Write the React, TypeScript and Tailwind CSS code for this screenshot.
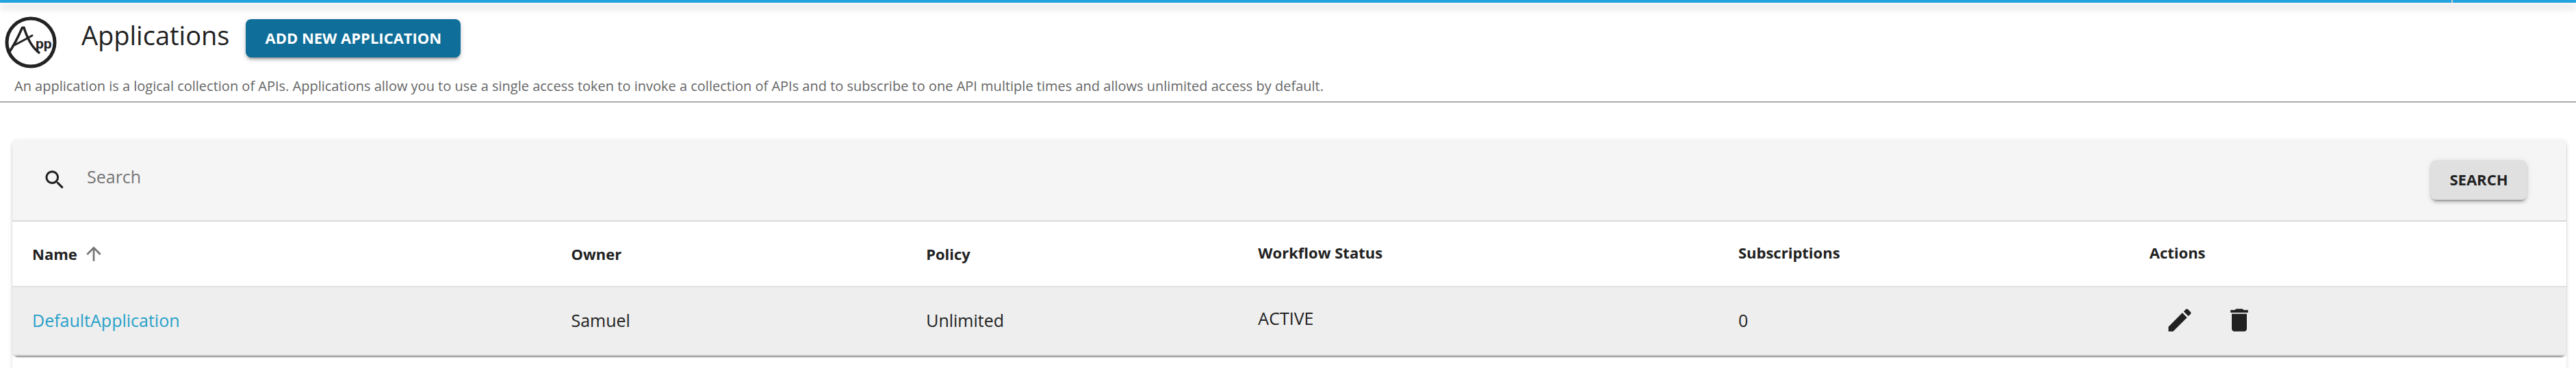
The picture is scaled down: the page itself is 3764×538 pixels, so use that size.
import React from "react";

const columns = [
  { label: "Name", width: "w-[21.1%]", sortable: true, sorted: true },
  { label: "Owner", width: "w-[13.9%]", sortable: true },
  { label: "Policy", width: "w-[13%]", sortable: true },
  { label: "Workflow Status", width: "w-[18.8%]" },
  { label: "Subscriptions", width: "w-[16.1%]" },
  { label: "Actions", width: "w-[17.1%]" },
];

const applications = [
  {
    name: "DefaultApplication",
    owner: "Samuel",
    policy: "Unlimited",
    status: "ACTIVE",
    subscriptions: 0,
  },
];

function Icon({ d, className }: { d: string; className: string }) {
  return (
    <svg viewBox="0 0 24 24" fill="currentColor" aria-hidden="true" className={className}>
      <path d={d} />
    </svg>
  );
}

const icons = {
  search:
    "M15.5 14h-.79l-.28-.27C15.41 12.59 16 11.11 16 9.5 16 5.91 13.09 3 9.5 3S3 5.91 3 9.5 5.91 16 9.5 16c1.61 0 3.09-.59 4.23-1.57l.27.28v.79l5 4.99L20.49 19l-4.99-5zm-6 0C7.01 14 5 11.99 5 9.5S7.01 5 9.5 5 14 7.01 14 9.5 11.99 14 9.5 14z",
  up: "M4 12l1.41 1.41L11 7.83V20h2V7.83l5.58 5.59L20 12l-8-8-8 8z",
  edit: "M3 17.25V21h3.75L17.81 9.94l-3.75-3.75L3 17.25zM20.71 7.04c.39-.39.39-1.02 0-1.41l-2.34-2.34c-.39-.39-1.02-.39-1.41 0l-1.83 1.83 3.75 3.75 1.83-1.83z",
  trash: "M6 19c0 1.1.9 2 2 2h8c1.1 0 2-.9 2-2V7H6v12zM19 4h-3.5l-1-1h-5l-1 1H5v2h14V4z",
};

function AppLogo() {
  return (
    <svg viewBox="0 0 76 78" className="h-[78px] w-[76px] shrink-0" role="img" aria-label="App">
      <circle cx="38" cy="40" r="35" fill="none" stroke="#222" strokeWidth="5" />
      <g fill="none" stroke="#222" strokeLinecap="round" strokeLinejoin="round">
        <path d="M6 55C13 45 20 31 25.500 18.500H28" strokeWidth="3.500" />
        <path d="M28 18.500C31 28 38 46 50 55" strokeWidth="3.500" />
        <path d="M12 45C20 41 31 35 40 30" strokeWidth="3" />
      </g>
      <text x="45" y="49" fontFamily="Roboto, sans-serif" fontSize="21" fontWeight="700" fill="#222">
        pp
      </text>
    </svg>
  );
}

export default function App() {
  return (
    <div className="flex min-h-screen flex-col bg-white font-['Open_Sans',sans-serif] text-[#212121]">
      <header className="relative flex h-1 justify-end bg-[#22a2de] pr-[180px] shadow-[0_4px_8px_-2px_rgba(0,0,0,0.2),0_8px_10px_0_rgba(0,0,0,0.14),0_2px_20px_0_rgba(0,0,0,0.12)]">
        <span className="w-0.5 bg-[#ccc]" />
      </header>

      <section className="border-b-2 border-[#aaa] pt-[18px] pb-1.5">
        <div className="flex items-center pl-[7px]">
          <AppLogo />
          <h1 className="ml-9 pb-5 text-[38px] leading-[48px]">Applications</h1>
          <button
            type="button"
            className="mb-2.5 ml-6 h-14 rounded-lg bg-[#0f6f9a] px-7 pb-0.5 text-[22px] leading-[54px] font-bold text-white shadow-[0_6px_2px_-4px_rgba(0,0,0,0.2),0_4px_4px_0_rgba(0,0,0,0.14),0_2px_10px_0_rgba(0,0,0,0.12)]"
          >
            ADD NEW APPLICATION
          </button>
        </div>
        <p className="mt-2.5 pl-[21px] text-xl leading-8 text-[#666]">
          An application is a logical collection of APIs. Applications allow you to use a single
          access token to invoke a collection of APIs and to subscribe to one API multiple times and
          allows unlimited access by default.
        </p>
      </section>

      <main className="mx-[18px] mr-3.5 mt-[54px] flex-1 rounded-t-lg bg-white shadow-[0_4px_2px_-2px_rgba(0,0,0,0.12),0_2px_2px_0_rgba(0,0,0,0.08),0_2px_6px_0_rgba(0,0,0,0.12)]">
        <div className="rounded-lg shadow-[0_4px_2px_-2px_rgba(0,0,0,0.3),0_2px_2px_0_rgba(0,0,0,0.2)]">
          <form
            onSubmit={(e) => e.preventDefault()}
            className="flex h-[120px] items-center rounded-t border-b-2 border-[#d9d9d9] bg-[#f5f5f5] pr-[58px] pl-11"
          >
            <Icon d={icons.search} className="size-9" />
            <input
              type="text"
              aria-label="Search applications"
              placeholder="Search"
              className="mx-[29px] mb-2.5 min-w-0 flex-1 bg-transparent text-[25px] leading-9 outline-none placeholder:text-[#757575]"
            />
            <button
              type="submit"
              className="h-[58px] w-[140px] rounded-lg bg-[#e0e0e0] pb-0.5 text-[22px] leading-[56px] font-bold shadow-[0_6px_2px_-4px_rgba(0,0,0,0.2),0_4px_4px_0_rgba(0,0,0,0.14),0_2px_10px_0_rgba(0,0,0,0.12)]"
            >
              SEARCH
            </button>
          </form>

          <table className="w-full table-fixed border-separate border-spacing-0 text-left">
            <thead>
              <tr className="text-[22px] leading-8">
                {columns.map((c) => (
                  <th
                    key={c.label}
                    scope="col"
                    className={`${c.width} h-24 border-b-2 border-[#e0e0e0] pb-1 pl-[29px] font-bold`}
                  >
                    {c.sortable ? (
                      <button type="button" className="flex items-center gap-2 pt-1">
                        {c.label}
                        {c.sorted && <Icon d={icons.up} className="size-8 text-[#757575]" />}
                      </button>
                    ) : (
                      c.label
                    )}
                  </th>
                ))}
              </tr>
            </thead>
            <tbody>
              {applications.map((a) => (
                <tr
                  key={a.name}
                  className="bg-[#eee] text-[25px] leading-9 [&>td]:h-[100px] [&>td]:border-b-2 [&>td]:border-[#e0e0e0] [&>td]:pl-[29px]"
                >
                  <td className="pb-0.5">
                    <a href="#application" className="text-[#27a0c9]">
                      {a.name}
                    </a>
                  </td>
                  <td className="pb-0.5">{a.owner}</td>
                  <td className="pb-0.5">{a.policy}</td>
                  <td className="pb-2">{a.status}</td>
                  <td className="pb-0.5">{a.subscriptions}</td>
                  <td className="pb-0.5">
                    <div className="flex gap-[43px] pl-[22px]">
                      <button type="button" aria-label="Edit application">
                        <Icon d={icons.edit} className="size-11" />
                      </button>
                      <button type="button" aria-label="Delete application">
                        <Icon d={icons.trash} className="size-11" />
                      </button>
                    </div>
                  </td>
                </tr>
              ))}
            </tbody>
          </table>
        </div>
      </main>
    </div>
  );
}
